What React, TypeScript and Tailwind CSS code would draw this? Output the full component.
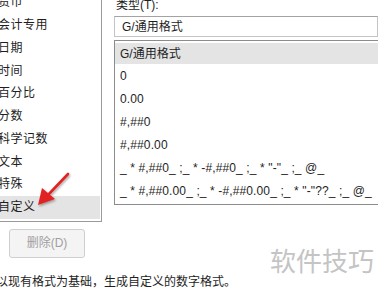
import { FC } from 'react';

const categories = ['货币', '会计专用', '日期', '时间', '百分比', '分数', '科学记数', '文本', '特殊', '自定义'];

const formats = [
  'G/通用格式',
  '0',
  '0.00',
  '#,##0',
  '#,##0.00',
  '_ * #,##0_ ;_ * -#,##0_ ;_ * "-"_ ;_ @_',
  '_ * #,##0.00_ ;_ * -#,##0.00_ ;_ * "-"??_ ;_ @_',
];

const font = { fontFamily: '"Liberation Sans", "Noto Sans CJK SC", sans-serif' };

const App: FC = () => {
  return (
    <div className="relative h-[288px] w-[378px] overflow-hidden bg-white text-[12px] text-[#1e1e1e]" style={font}>
      <div className="flex">
        {/* category list + delete button */}
        <div className="w-[102px] shrink-0">
          <div className="-mt-[9px] border-r border-b border-[#9a9a9a] pb-[2px] pr-[1px]">
            {categories.map((c, i) => (
              <div
                key={c}
                className={`flex h-[22.75px] items-center text-[12px] ${i === categories.length - 1 ? 'bg-[#e4e4e4]' : ''}`}
              >
                <span className="-ml-[2px] tracking-[0.5px]">{c}</span>
              </div>
            ))}
          </div>
          <div className="mt-[7px] ml-[9px] flex h-[29px] w-[76px] items-center justify-center rounded-[3px] border border-[#cfcfcf] bg-[#f4f4f4] text-[#a0a0a0]">
            删除(D)
          </div>
        </div>

        {/* type field + format list */}
        <div className="ml-[12px] flex-1">
          <div className="-mt-[3px] h-[19px] leading-[16px] pl-[2px]">类型(T):</div>
          <div className="flex h-[21px] items-center border border-[#c4c4c4] border-t-[#a3a3a3] pl-[7px]">G/通用格式</div>
          <div className="mt-[3px] mr-[-20px] h-[165px] border border-[#8c8c8c] pt-[2px]">
            {formats.map((f, i) => (
              <div
                key={f}
                className={`flex items-center whitespace-pre pl-[5px] ${i === 0 ? 'h-[21px] bg-[#e4e4e4]' : 'h-[23px] tracking-[0.12px]'}`}
              >
                {f}
              </div>
            ))}
          </div>
        </div>
      </div>

      <div className="mt-[15px] -ml-[4px] whitespace-nowrap">以现有格式为基础，生成自定义的数字格式。</div>

      {/* watermark */}
      <div className="absolute left-[270px] top-[247px] text-[26px] leading-[30px] text-[#c4c4c4]">软件技巧</div>

      {/* red pointer arrow */}
      <svg className="absolute left-[30px] top-[168px]" width="46" height="42" viewBox="0 0 46 42">
        <defs>
          <filter id="sh" x="-20%" y="-20%" width="140%" height="140%">
            <feDropShadow dx="1" dy="1.5" stdDeviation="1" floodColor="#000" floodOpacity="0.35" />
          </filter>
        </defs>
        <g filter="url(#sh)">
          <path d="M38 6 L18 27" stroke="#e12222" strokeWidth="2.6" strokeLinecap="round" />
          <path d="M8 37 L12 20 L25 31 Z" fill="#e12222" />
        </g>
      </svg>
    </div>
  );
};

export default App;
